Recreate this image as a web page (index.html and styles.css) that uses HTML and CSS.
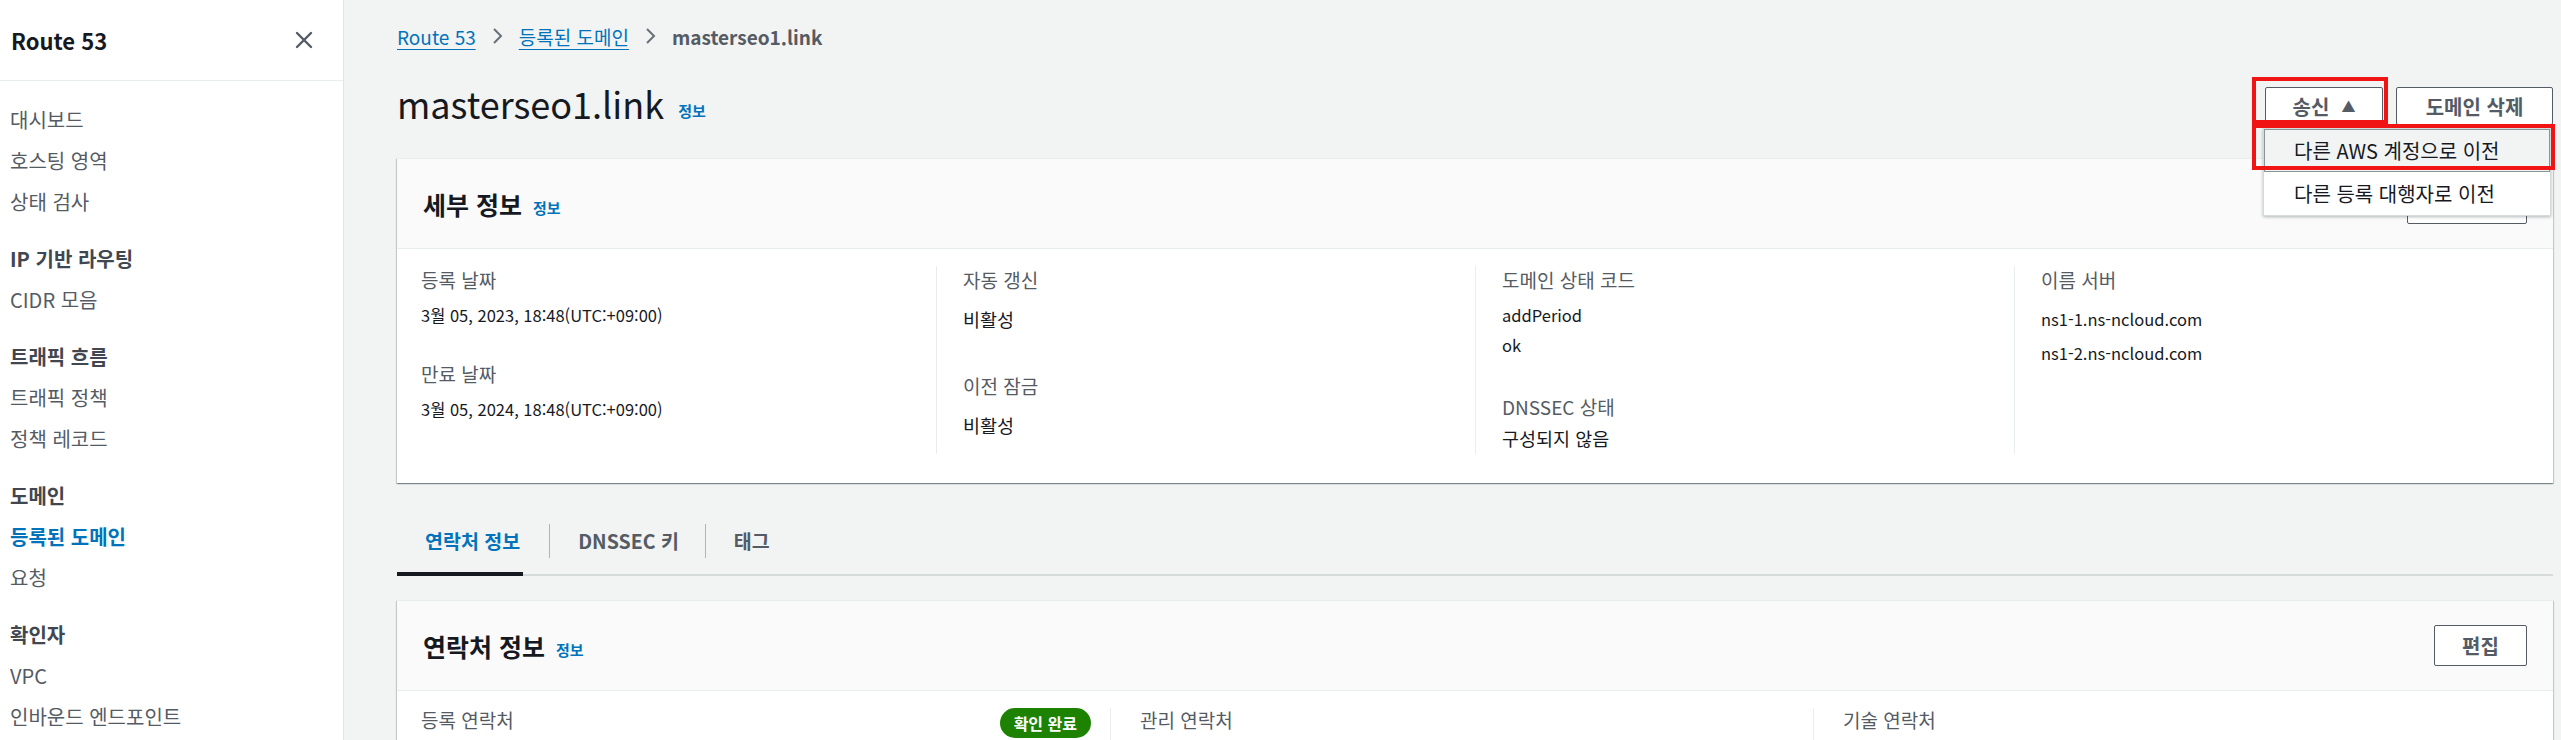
FILE: index.html
```html
<!DOCTYPE html>
<html lang="ko">
<head>
<meta charset="utf-8">
<title>masterseo1.link | Route 53</title>
<link rel="stylesheet" href="styles.css">
</head>
<body>
<div class="app">
  <aside class="sidebar">
    <div class="side-head">
      <span class="side-title">Route 53</span>
      <svg class="close" width="20" height="20" viewBox="0 0 20 20" aria-hidden="true"><path d="M3 3 L17 17 M17 3 L3 17" stroke="#545b64" stroke-width="2.4" fill="none" stroke-linecap="round"/></svg>
    </div>
    <nav class="nav">
      <a class="nav-item">대시보드</a>
      <a class="nav-item">호스팅 영역</a>
      <a class="nav-item">상태 검사</a>
      <div class="nav-section">IP 기반 라우팅</div>
      <a class="nav-item">CIDR 모음</a>
      <div class="nav-section">트래픽 흐름</div>
      <a class="nav-item">트래픽 정책</a>
      <a class="nav-item">정책 레코드</a>
      <div class="nav-section">도메인</div>
      <a class="nav-item active">등록된 도메인</a>
      <a class="nav-item">요청</a>
      <div class="nav-section">확인자</div>
      <a class="nav-item">VPC</a>
      <a class="nav-item">인바운드 엔드포인트</a>
    </nav>
  </aside>

  <main class="main">
    <div class="crumbs">
      <a class="crumb-link">Route 53</a>
      <svg class="chev" width="13" height="20" viewBox="0 0 13 20" aria-hidden="true"><path d="M3 3 L10 10 L3 17" stroke="#687078" stroke-width="2" fill="none"/></svg>
      <a class="crumb-link">등록된 도메인</a>
      <svg class="chev" width="13" height="20" viewBox="0 0 13 20" aria-hidden="true"><path d="M3 3 L10 10 L3 17" stroke="#687078" stroke-width="2" fill="none"/></svg>
      <span class="crumb-current">masterseo1.link</span>
    </div>

    <div class="title-row">
      <h1 class="title">masterseo1.link <a class="info">정보</a></h1>
      <div class="actions">
        <div class="send-wrap">
          <button class="btn btn-send">송신 <span class="caret">▲</span></button>
          <ul class="menu">
            <li class="menu-item highlighted">다른 AWS 계정으로 이전</li>
            <li class="menu-item">다른 등록 대행자로 이전</li>
          </ul>
          <span class="mark mark-btn"></span>
          <span class="mark mark-item"></span>
        </div>
        <button class="btn btn-delete">도메인 삭제</button>
      </div>
    </div>

    <section class="card">
      <header class="card-head">
        <h2 class="card-title">세부 정보 <a class="info">정보</a></h2>
        <button class="btn btn-hidden"></button>
      </header>
      <div class="details">
        <div class="col">
          <div class="field">
            <div class="label">등록 날짜</div>
            <div class="value">3월 05, 2023, 18:48(UTC:+09:00)</div>
          </div>
          <div class="field">
            <div class="label">만료 날짜</div>
            <div class="value">3월 05, 2024, 18:48(UTC:+09:00)</div>
          </div>
        </div>
        <div class="col">
          <div class="field">
            <div class="label">자동 갱신</div>
            <div class="value value-loose ko">비활성</div>
          </div>
          <div class="field field-wide">
            <div class="label">이전 잠금</div>
            <div class="value value-loose ko">비활성</div>
          </div>
        </div>
        <div class="col">
          <div class="field">
            <div class="label">도메인 상태 코드</div>
            <div class="value list">
              <div>addPeriod</div>
              <div>ok</div>
            </div>
          </div>
          <div class="field field-tight">
            <div class="label">DNSSEC 상태</div>
            <div class="value value-tight ko">구성되지 않음</div>
          </div>
        </div>
        <div class="col">
          <div class="field">
            <div class="label">이름 서버</div>
            <div class="value value-loose list ns">
              <div>ns1-1.ns-ncloud.com</div>
              <div>ns1-2.ns-ncloud.com</div>
            </div>
          </div>
        </div>
      </div>
    </section>

    <div class="tabs">
      <a class="tab active">연락처 정보</a>
      <a class="tab sep">DNSSEC 키</a>
      <a class="tab sep">태그</a>
    </div>

    <section class="card">
      <header class="card-head">
        <h2 class="card-title">연락처 정보 <a class="info">정보</a></h2>
        <button class="btn btn-edit">편집</button>
      </header>
      <div class="contacts">
        <div class="ccol first">
          <span class="label">등록 연락처</span>
          <span class="badge">확인 완료</span>
        </div>
        <div class="ccol">
          <span class="label">관리 연락처</span>
        </div>
        <div class="ccol">
          <span class="label">기술 연락처</span>
        </div>
      </div>
    </section>
  </main>
</div>
</body>
</html>
```

FILE: styles.css
```css
* { box-sizing: border-box; }

html, body {
  margin: 0;
  padding: 0;
  height: 740px;
  overflow: hidden;
}

body {
  background: #f2f3f3;
  font-family: "Noto Sans CJK KR", "Noto Sans", sans-serif;
  color: #16191f;
}

a { text-decoration: none; }

.app {
  display: flex;
  height: 740px;
}

/* Sidebar */
.sidebar {
  width: 344px;
  flex: none;
  background: #ffffff;
  border-right: 1px solid #e1e4e6;
}

.side-head {
  height: 81px;
  border-bottom: 1px solid #eaeded;
  display: flex;
  align-items: center;
  justify-content: space-between;
  padding: 0 29px 0 11px;
}

.side-title {
  font-size: 22px;
  font-weight: 700;
  color: #16191f;
}

.close { display: block; }

.nav {
  display: flex;
  flex-direction: column;
  padding: 18px 0 0 10px;
}

.nav-item,
.nav-section {
  font-size: 20px;
  line-height: 41px;
  height: 41px;
  color: #545b64;
}

.nav-section {
  margin-top: 16px;
  font-weight: 700;
  color: #414750;
}

.nav-item.active {
  color: #0073bb;
  font-weight: 700;
}

/* Main */
.main {
  flex: 1;
  padding: 24px 8px 0 53px;
  min-width: 0;
}

.crumbs {
  display: flex;
  align-items: center;
  height: 24px;
  font-size: 19px;
  gap: 15px;
}

.crumb-link {
  color: #0073bb;
  text-decoration: underline;
  text-underline-offset: 4px;
}

.crumb-current {
  color: #545b64;
  font-weight: 700;
}

.chev { display: block; }

.title-row {
  margin-top: 36px;
  height: 44px;
  display: flex;
  align-items: center;
  justify-content: space-between;
}

.title {
  margin: 0;
  font-size: 36px;
  line-height: 44px;
  font-weight: 400;
  color: #16191f;
}

.info {
  font-size: 15px;
  font-weight: 700;
  color: #0073bb;
  margin-left: 4px;
  vertical-align: middle;
}

.title .info { position: relative; top: 2px; }

.actions {
  display: flex;
  align-items: center;
  gap: 13px;
}

.send-wrap { position: relative; }

.btn {
  font-family: inherit;
  font-size: 20px;
  font-weight: 700;
  color: #545b64;
  background: #ffffff;
  border: 1px solid #545b64;
  border-radius: 2px;
  height: 38px;
  padding: 0;
  display: flex;
  align-items: center;
  justify-content: center;
}

.btn-send { width: 118px; gap: 12px; }
.caret { font-size: 14px; color: #545b64; }
.btn-delete { width: 157px; }

.menu {
  position: absolute;
  left: -2px;
  top: 41px;
  width: 288px;
  margin: 0;
  padding: 0;
  list-style: none;
  background: #ffffff;
  border: 1px solid #d5dbdb;
  box-shadow: 0 1px 3px rgba(0, 28, 36, 0.3);
  z-index: 5;
}

.menu-item {
  height: 43px;
  display: flex;
  align-items: center;
  padding-left: 29px;
  font-size: 20px;
  color: #16191f;
  border: 1px solid transparent;
}

.menu-item.highlighted {
  background: #f2f3f3;
  border-color: #879596;
}

.mark {
  position: absolute;
  border: 4px solid #f01414;
  z-index: 6;
}

.mark-btn {
  left: -13px;
  top: -10px;
  width: 136px;
  height: 47px;
}

.mark-item {
  left: -13px;
  top: 37px;
  width: 303px;
  height: 46px;
}

/* Cards */
.card {
  margin-top: 30px;
  background: #ffffff;
  border-top: 1px solid #eaeded;
  box-shadow: 0 1px 1px 0 rgba(0, 28, 36, 0.3), 1px 1px 1px 0 rgba(0, 28, 36, 0.15), -1px 1px 1px 0 rgba(0, 28, 36, 0.15);
}

.card-head {
  height: 90px;
  background: #fafafa;
  border-bottom: 1px solid #eaeded;
  display: flex;
  align-items: center;
  justify-content: space-between;
  padding: 0 26px 0 26px;
}

.card-title {
  margin: 0;
  font-size: 25px;
  font-weight: 700;
  color: #16191f;
}

.btn-hidden { width: 120px; height: 40px; }
.btn-edit { width: 93px; height: 41px; }

.details {
  display: grid;
  grid-template-columns: repeat(4, 1fr);
  padding: 17px 0 29px 0;
}

.col {
  min-height: 188px;
  padding: 2px 20px 0 26px;
  border-left: 1px solid #eaeded;
}

.col:first-child {
  border-left: none;
  padding-left: 24px;
}

.label {
  font-size: 19px;
  line-height: 24px;
  color: #545b64;
}

.value {
  margin-top: 11px;
  font-size: 16.5px;
  line-height: 24px;
  color: #16191f;
}

.value.ko { font-size: 18.5px; }

.value-loose { margin-top: 15px; }
.value-tight { margin-top: 7px; }

.list div + div { margin-top: 6px; }
.ns div + div { margin-top: 10px; }

.field + .field { margin-top: 35px; }
.col .field-wide { margin-top: 43px; }
.col .field-tight { margin-top: 38px; }

/* Tabs */
.tabs {
  margin-top: 24px;
  height: 69px;
  display: flex;
  border-bottom: 2px solid #d5dbdb;
}

.tab {
  position: relative;
  display: flex;
  align-items: center;
  height: 67px;
  padding: 0 26px 0 29px;
  font-size: 19.5px;
  font-weight: 700;
  color: #545b64;
}

.tab.sep::before {
  content: "";
  position: absolute;
  left: 0;
  top: 17px;
  height: 34px;
  border-left: 1px solid #aab7b8;
}

.tab.active { color: #0073bb; padding-left: 28px; padding-right: 29px; }

.tab.active::after {
  content: "";
  position: absolute;
  left: 0;
  right: 26px;
  bottom: -2px;
  height: 4px;
  background: #16191f;
}

.tabs + .card { margin-top: 24px; }

/* Contacts */
.contacts {
  display: grid;
  grid-template-columns: 713px 703px 1fr;
  padding-top: 17px;
  height: 60px;
}

.ccol {
  padding: 0 19px 0 29px;
  border-left: 1px solid #eaeded;
  display: flex;
  align-items: flex-start;
  justify-content: space-between;
}

.ccol.first {
  border-left: none;
  padding-left: 24px;
}

.badge {
  background: #1d8102;
  color: #ffffff;
  font-size: 16px;
  font-weight: 700;
  height: 30px;
  padding: 0 14px;
  border-radius: 15px;
  display: flex;
  align-items: center;
}
```
